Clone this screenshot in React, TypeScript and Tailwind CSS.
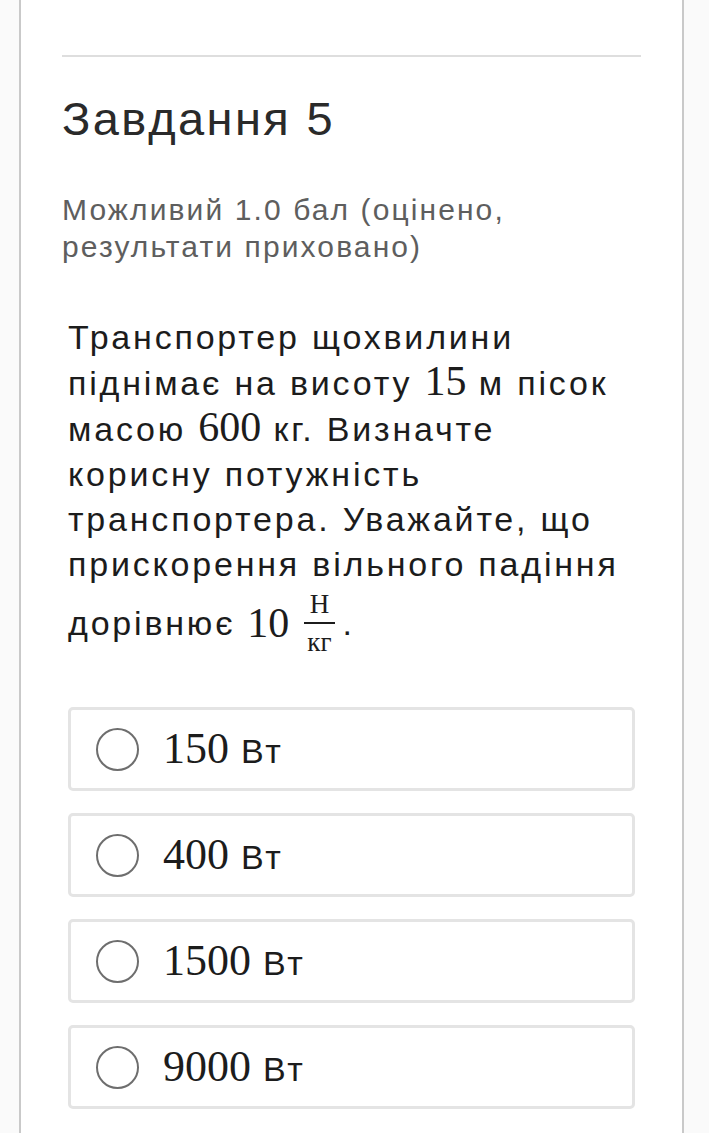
const sans = "font-['Liberation_Sans',Arial,sans-serif]"
const serif = "font-['Liberation_Serif','Times_New_Roman',serif] tracking-normal"

function M({ children }: { children: React.ReactNode }) {
  return <span className={`${serif} text-[42px] leading-none`}>{children}</span>
}

function Option({ value }: { value: string }) {
  return (
    <div className="flex h-[84px] items-center rounded-[5px] border-[3px] border-[#e4e4e4] bg-white pl-[25px]">
      <div className="h-[43px] w-[43px] rounded-full border-2 border-[#6e6e6e]" />
      <div className="ml-[24px] flex items-baseline text-[#1c1c1c]">
        <span className={`${serif} text-[44px] leading-none`}>{value}</span>
        <span className="ml-[12px] text-[34px] leading-none tracking-[2.8px]">Вт</span>
      </div>
    </div>
  )
}

export default function App() {
  return (
    <div className={`min-h-[1133px] bg-[#fafafa] ${sans}`}>
      <div className="ml-[19px] min-h-[1133px] w-[665px] border-x-2 border-[#c9c9c9] bg-white px-[41px]">
        <div className="pt-[55px]">
          <div className="h-[2px] bg-[#dedede]" />
        </div>

        <h2 className="mt-[34px] text-[47px] leading-[56px] tracking-[2.4px] text-[#2a2a2a]">Завдання 5</h2>

        <p className="mt-[44px] text-[30px] leading-[37px] tracking-[2.1px] text-[#5e5e5e]">
          Можливий 1.0 бал (оцінено,
          <br />
          результати приховано)
        </p>

        <div className="mx-[6px] mt-[50px] text-[#1c1c1c]">
          <p className="text-[34px] leading-[45px] tracking-[2.8px]">
            Транспортер щохвилини
            <br />
            піднімає на висоту <M>15</M> м пісок
            <br />
            масою <M>600</M> кг. Визначте
            <br />
            корисну потужність
            <br />
            транспортера. Уважайте, що
            <br />
            прискорення вільного падіння
          </p>
          <div className="-mt-[1px] flex items-center text-[34px] tracking-[2.8px]">
            <span className="leading-none">дорівнює</span>
            <span className="ml-[12px] leading-none">
              <M>10</M>
            </span>
            <span className={`${serif} ml-[15px] flex flex-col items-center text-[27px] leading-[36px]`}>
              <span className="px-[3px]">Н</span>
              <span className="h-[2px] w-full bg-[#1c1c1c]" />
              <span className="px-[3px]">кг</span>
            </span>
            <span className="ml-[8px] leading-none">.</span>
          </div>

          <div className="mt-[47px] flex flex-col gap-[22px]">
            <Option value="150" />
            <Option value="400" />
            <Option value="1500" />
            <Option value="9000" />
          </div>
        </div>
      </div>
    </div>
  )
}
